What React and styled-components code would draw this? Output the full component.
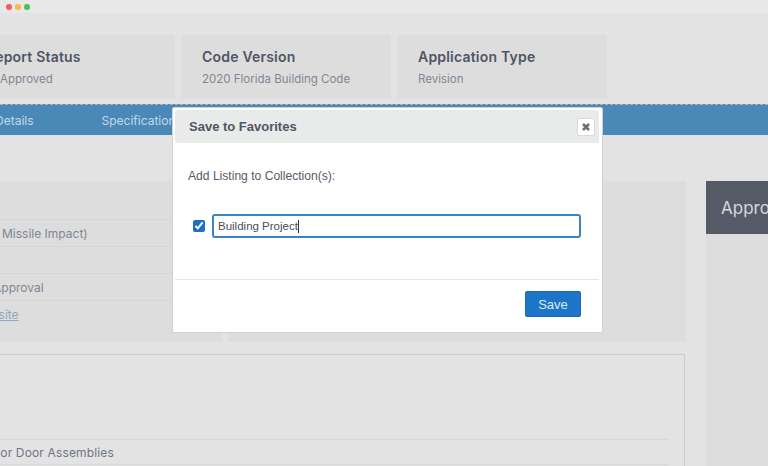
import React from "react";
import styled, { createGlobalStyle } from "styled-components";

const Global = createGlobalStyle`
  html, body { margin: 0; padding: 0; background: #e3e3e3; }
  * { box-sizing: border-box; }
`;
const Screen = styled.div`
  position: relative; width: 768px; height: 466px; overflow: hidden;
  background: #e3e3e3; font-family: "Inter", "Liberation Sans", sans-serif;
`;
const TitleBar = styled.div`
  height: 13px; background: #e8e8e8; display: flex; align-items: center; gap: 3.5px; padding: 1px 0 0 6px;
`;
const Dot = styled.span`
  width: 5.5px; height: 5.5px; border-radius: 50%; background: ${p => p.$color};
`;
const CardRow = styled.div`
  display: flex; gap: 6px; margin: 22px 0 0 -35px;
`;
const Card = styled.div`
  width: 210px; height: 64px; background: #dddddd; padding: 12px 0 0 21px;
`;
const CardTitle = styled.div`
  font-size: 14px; line-height: 19px; font-weight: 600; color: #4f5664; white-space: nowrap;
  letter-spacing: 0.2px;
`;
const CardValue = styled.div`
  font-size: 11.5px; line-height: 16px; margin: 5px 0 0 ${p => p.$indent || 0}px; color: #7f8794; white-space: nowrap;
`;
const TabBar = styled.div`
  display: flex; align-items: center; gap: 68px; height: 31px; margin: 5px 0 0; padding-top: 1px;
  background: #4a88b7; border-top: 1px dashed #a9b3ba; color: #c3d8e8; font-size: 12px; white-space: nowrap;
`;
const FirstTab = styled.span`
  margin-left: -5px;
`;
const Body = styled.div`
  display: flex; gap: 20px; margin: 46px 0 0 -40px;
`;
const Main = styled.div`
  width: 726px; flex: none;
`;
const Panels = styled.div`
  display: flex; gap: 6px; height: 161px;
`;
const LeftPanel = styled.div`
  width: 262px; background: #dddddd; padding-top: 12px;
`;
const RightPanel = styled.div`
  flex: 1; background: #dddddd;
`;
const Row = styled.div`
  height: 27px; display: flex; align-items: center; padding-left: ${p => p.$pad || 0}px;
  font-size: 12px; color: #7f8794; white-space: nowrap;
  border-bottom: ${p => (p.$plain ? "none" : "1px dotted #cfcfcf")};
`;
const SiteLink = styled.a`
  color: #8ea6bf; text-decoration: underline;
`;
const LowerBox = styled.div`
  margin: 12px 1px 0 0; height: 130px; border: 1px solid #cdcdcd; border-bottom: none; padding: 84px 16px 0 0;
`;
const LowerRow = styled.div`
  height: 26px; display: flex; align-items: center; padding-left: ${p => p.$pad}px;
  border-top: 1px solid #d8d8d8; border-bottom: 1px solid #d8d8d8; letter-spacing: 0.15px;
  font-size: 12px; color: #6f7683; white-space: nowrap;
`;
const Aside = styled.div`
  width: 100px; flex: none; height: 300px; background: #dddddd;
`;
const AsideHead = styled.div`
  height: 53px; background: #555b66; color: #d5d7da; font-size: 17px; display: flex; align-items: center; padding-left: 15px;
`;
const Modal = styled.div`
  position: absolute; left: 172px; top: 107px; width: 431px; height: 226px;
  background: #fff; border: 1px solid #d2d2d2; border-radius: 2px; padding: 2px;
  font-family: "Liberation Sans", Arial, sans-serif; display: flex; flex-direction: column;
`;
const ModalHead = styled.div`
  height: 33px; flex: none; background: #e9eaea; border-radius: 2px; display: flex; align-items: center;
  justify-content: space-between; padding: 0 4px 0 14px; margin-right: 1px;
`;
const ModalTitle = styled.div`
  font-size: 13px; font-weight: 700; color: #4f5664;
`;
const CloseButton = styled.button`
  width: 18px; height: 18px; padding: 0; background: #fff; border: 1px solid #d9d9d9; border-radius: 2px;
  display: flex; align-items: center; justify-content: center;
`;
const ModalBody = styled.div`
  flex: 1; padding: 25px 19px 0 13px;
`;
const Prompt = styled.div`
  font-size: 12.1px; line-height: 16px; color: #555b66;
`;
const CheckRow = styled.div`
  display: flex; align-items: center; gap: 7px; margin: 30px 0 0 5px;
`;
const Check = styled.input`
  width: 12px; height: 12px; margin: 0; accent-color: #1c6fc2; flex: none;
`;
const Field = styled.div`
  flex: 1; height: 24px; border: 2px solid #3a83c5; border-radius: 3px; display: flex; align-items: center;
  padding-left: 4px; font-size: 11.5px; color: #4a4f59; background: #fff;
`;
const Caret = styled.span`
  width: 1px; height: 13px; background: #333;
`;
const ModalFoot = styled.div`
  height: 51px; flex: none; border-top: 1px solid #e6e6e6; display: flex; align-items: flex-start; justify-content: flex-end;
  padding: 11px 18px 0 0; margin-right: 1px;
`;
const SaveButton = styled.button`
  width: 56px; height: 26px; background: #1c75c9; border: 1px solid #1a68b2; border-radius: 2px;
  color: #dbe8f4; font: 13px "Liberation Sans", Arial, sans-serif; padding: 0;
`;

export default function App() {
  return (
    <Screen>
      <Global />
      <TitleBar>
        <Dot $color="#f4605a" />
        <Dot $color="#f7b84f" />
        <Dot $color="#45c659" />
      </TitleBar>
      <CardRow>
        <Card>
          <CardTitle>Report Status</CardTitle>
          <CardValue $indent={14}>Approved</CardValue>
        </Card>
        <Card>
          <CardTitle>Code Version</CardTitle>
          <CardValue>2020 Florida Building Code</CardValue>
        </Card>
        <Card>
          <CardTitle>Application Type</CardTitle>
          <CardValue>Revision</CardValue>
        </Card>
      </CardRow>
      <TabBar>
        <FirstTab>Details</FirstTab>
        <span>Specifications</span>
      </TabBar>
      <Body>
        <Main>
          <Panels>
            <LeftPanel>
              <Row />
              <Row $pad={42}>Missile Impact)</Row>
              <Row />
              <Row $pad={33}>Approval</Row>
              <Row $plain $pad={13}>
                <SiteLink>Website</SiteLink>
              </Row>
            </LeftPanel>
            <RightPanel />
          </Panels>
          <LowerBox>
            <LowerRow $pad={6}>Exterior Door Assemblies</LowerRow>
          </LowerBox>
        </Main>
        <Aside>
          <AsideHead>Approval</AsideHead>
        </Aside>
      </Body>
      <Modal>
        <ModalHead>
          <ModalTitle>Save to Favorites</ModalTitle>
          <CloseButton aria-label="Close">
            <svg width="10" height="10" viewBox="0 0 10 10">
              <path d="M2 2l6 6M8 2l-6 6" stroke="#6b6f76" strokeWidth="2.6" />
            </svg>
          </CloseButton>
        </ModalHead>
        <ModalBody>
          <Prompt>Add Listing to Collection(s):</Prompt>
          <CheckRow>
            <Check type="checkbox" defaultChecked />
            <Field>
              Building Project
              <Caret />
            </Field>
          </CheckRow>
        </ModalBody>
        <ModalFoot>
          <SaveButton>Save</SaveButton>
        </ModalFoot>
      </Modal>
    </Screen>
  );
}
